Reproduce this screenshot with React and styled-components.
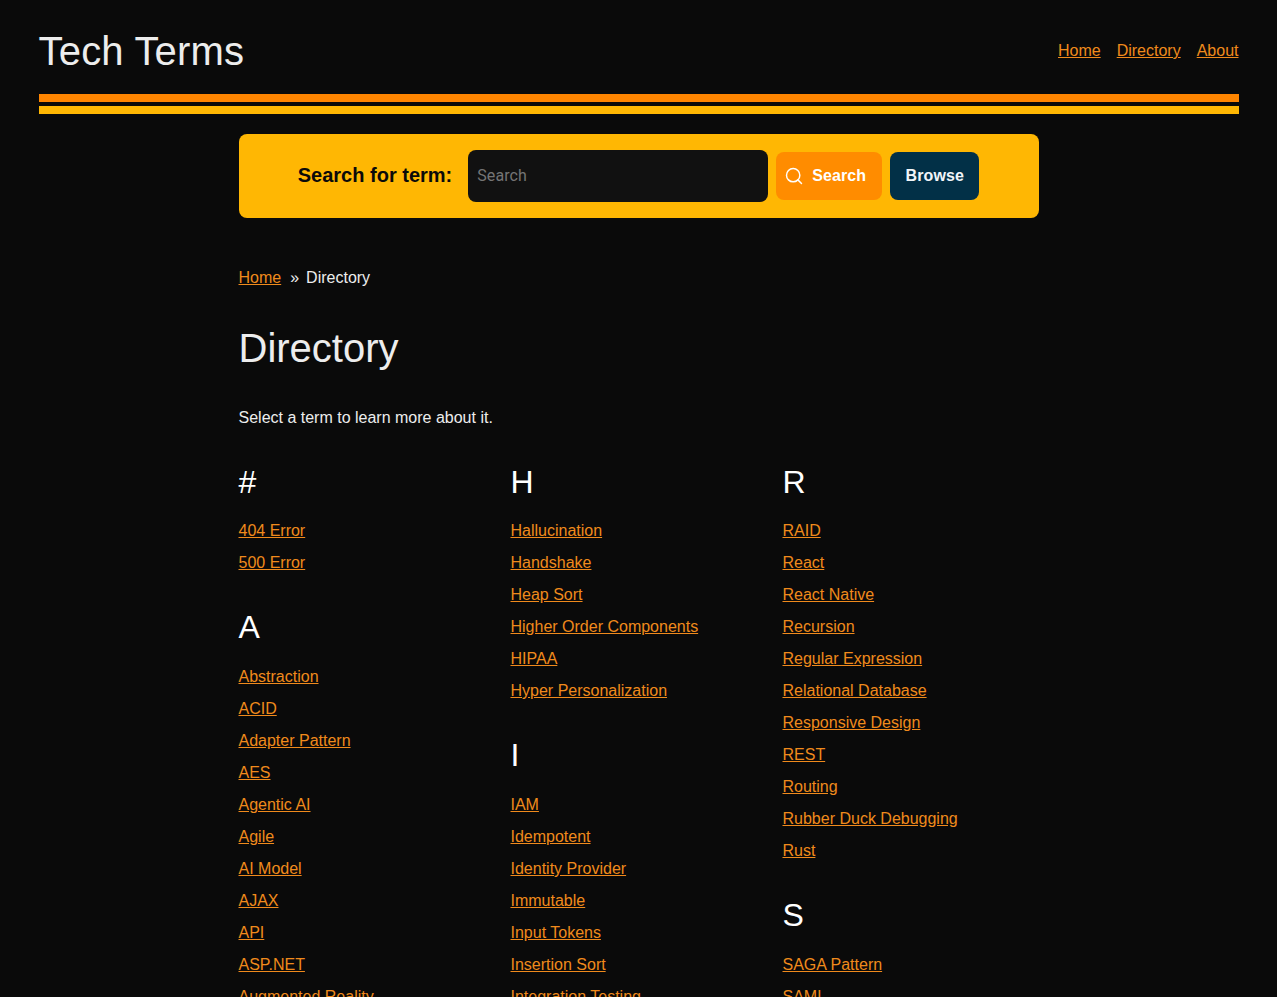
import React from 'react'
import styled, { createGlobalStyle } from 'styled-components'
import { Search } from 'lucide-react'

const columns = [
    [
        { letter: '#', terms: ['404 Error', '500 Error'] },
        { letter: 'A', terms: ['Abstraction', 'ACID', 'Adapter Pattern', 'AES', 'Agentic AI', 'Agile', 'AI Model', 'AJAX', 'API', 'ASP.NET', 'Augmented Reality'] },
    ],
    [
        { letter: 'H', terms: ['Hallucination', 'Handshake', 'Heap Sort', 'Higher Order Components', 'HIPAA', 'Hyper Personalization'] },
        { letter: 'I', terms: ['IAM', 'Idempotent', 'Identity Provider', 'Immutable', 'Input Tokens', 'Insertion Sort', 'Integration Testing'] },
    ],
    [
        { letter: 'R', terms: ['RAID', 'React', 'React Native', 'Recursion', 'Regular Expression', 'Relational Database', 'Responsive Design', 'REST', 'Routing', 'Rubber Duck Debugging', 'Rust'] },
        { letter: 'S', terms: ['SAGA Pattern', 'SAML'] },
    ],
]

function App() {
    return (
        <Page>
            <GlobalStyle />
            <Header>
                <TopRow>
                    <Logo>Tech Terms</Logo>
                    <Nav>
                        <Link href="#">Home</Link>
                        <Link href="#">Directory</Link>
                        <Link href="#">About</Link>
                    </Nav>
                </TopRow>
                <Stripe $color="#ff8500" />
                <Stripe $color="#ffb703" />
            </Header>
            <Main>
                <SearchBar>
                    <SearchLabel htmlFor="term">Search for term:</SearchLabel>
                    <SearchInput id="term" placeholder="Search" />
                    <SearchButton>
                        <Search size={20} strokeWidth={1.75} />
                        Search
                    </SearchButton>
                    <BrowseButton>Browse</BrowseButton>
                </SearchBar>
                <Breadcrumbs>
                    <Link href="#">Home</Link>
                    <Separator>»</Separator>
                    <span>Directory</span>
                </Breadcrumbs>
                <Title>Directory</Title>
                <Intro>Select a term to learn more about it.</Intro>
                <Columns>
                    {columns.map((groups) => (
                        <div key={groups[0].letter}>
                            {groups.map((group) => (
                                <Group key={group.letter}>
                                    <Letter>{group.letter}</Letter>
                                    {group.terms.map((term) => (
                                        <Term key={term}>
                                            <Link href="#">{term}</Link>
                                        </Term>
                                    ))}
                                </Group>
                            ))}
                        </div>
                    ))}
                </Columns>
            </Main>
        </Page>
    )
}

export default App

const GlobalStyle = createGlobalStyle`
    html, body {
        margin: 0;
        background: #0a0a0a;
    }
    body {
        color: #ededed;
        font-family: "Liberation Sans", Arial, sans-serif;
        font-size: 16px;
    }
`

const Page = styled.div`
    height: 997px;
    overflow: hidden;
`

const Header = styled.header`
    width: 1200px;
    margin: 0 auto;
    padding-top: 24px;
`

const TopRow = styled.div`
    display: flex;
    justify-content: space-between;
    align-items: center;
    height: 54px;
    margin-bottom: 16px;
`

const Logo = styled.div`
    font-size: 40px;
    line-height: 54px;
    letter-spacing: 0.2px;
`

const Nav = styled.nav`
    display: flex;
    gap: 16px;
`

const Link = styled.a`
    color: #f08a1c;
`

const Stripe = styled.div`
    height: 8px;
    margin-bottom: 4px;
    background: ${(props) => props.$color};
`

const Main = styled.main`
    width: 800px;
    margin: 20px auto 0;
`

const SearchBar = styled.form`
    display: flex;
    justify-content: center;
    align-items: center;
    gap: 8px;
    height: 84px;
    border-radius: 8px;
    background: #ffb703;
`

const SearchLabel = styled.label`
    margin-right: 8px;
    padding-bottom: 2px;
    color: #0a0a0a;
    font-size: 20px;
    font-weight: 700;
`

const SearchInput = styled.input`
    box-sizing: border-box;
    width: 300px;
    height: 52px;
    padding: 0 9px 2px;
    border: 0;
    border-radius: 8px;
    background: #111111;
    color: #ededed;
    font-family: Roboto, sans-serif;
    font-size: 16px;
    letter-spacing: 0.1px;
    &::placeholder {
        color: #757575;
    }
`

const ButtonBase = styled.button`
    display: flex;
    align-items: center;
    height: 48px;
    border: 0;
    border-radius: 8px;
    color: #f1f5f9;
    font-family: "Liberation Sans", Arial, sans-serif;
    font-size: 16px;
    font-weight: 700;
    letter-spacing: 0.1px;
`

const SearchButton = styled(ButtonBase)`
    gap: 8px;
    width: 106px;
    padding: 0 0 0 8px;
    background: #ff8c00;
    color: #fff;
`

const BrowseButton = styled(ButtonBase)`
    justify-content: center;
    width: 89px;
    padding: 0;
    background: #023047;
`

const Breadcrumbs = styled.div`
    display: flex;
    margin-top: 51px;
    line-height: 18px;
`

const Separator = styled.span`
    margin: 0 7px 0 9px;
`

const Title = styled.h1`
    margin: 38px 0 0;
    font-size: 40px;
    font-weight: 400;
    line-height: 46px;
`

const Intro = styled.p`
    margin: 38px 0 0;
    line-height: 18px;
`

const Columns = styled.div`
    display: grid;
    grid-template-columns: repeat(3, 1fr);
    gap: 16px;
    margin-top: 37px;
`

const Group = styled.section`
    margin-bottom: 30px;
    &:first-child h2 {
        margin-bottom: 14px;
    }
`

const Letter = styled.h2`
    margin: 0 0 15px;
    color: #fff;
    font-size: 32px;
    font-weight: 400;
    line-height: 37px;
`

const Term = styled.div`
    height: 32px;
    line-height: 32px;
`
